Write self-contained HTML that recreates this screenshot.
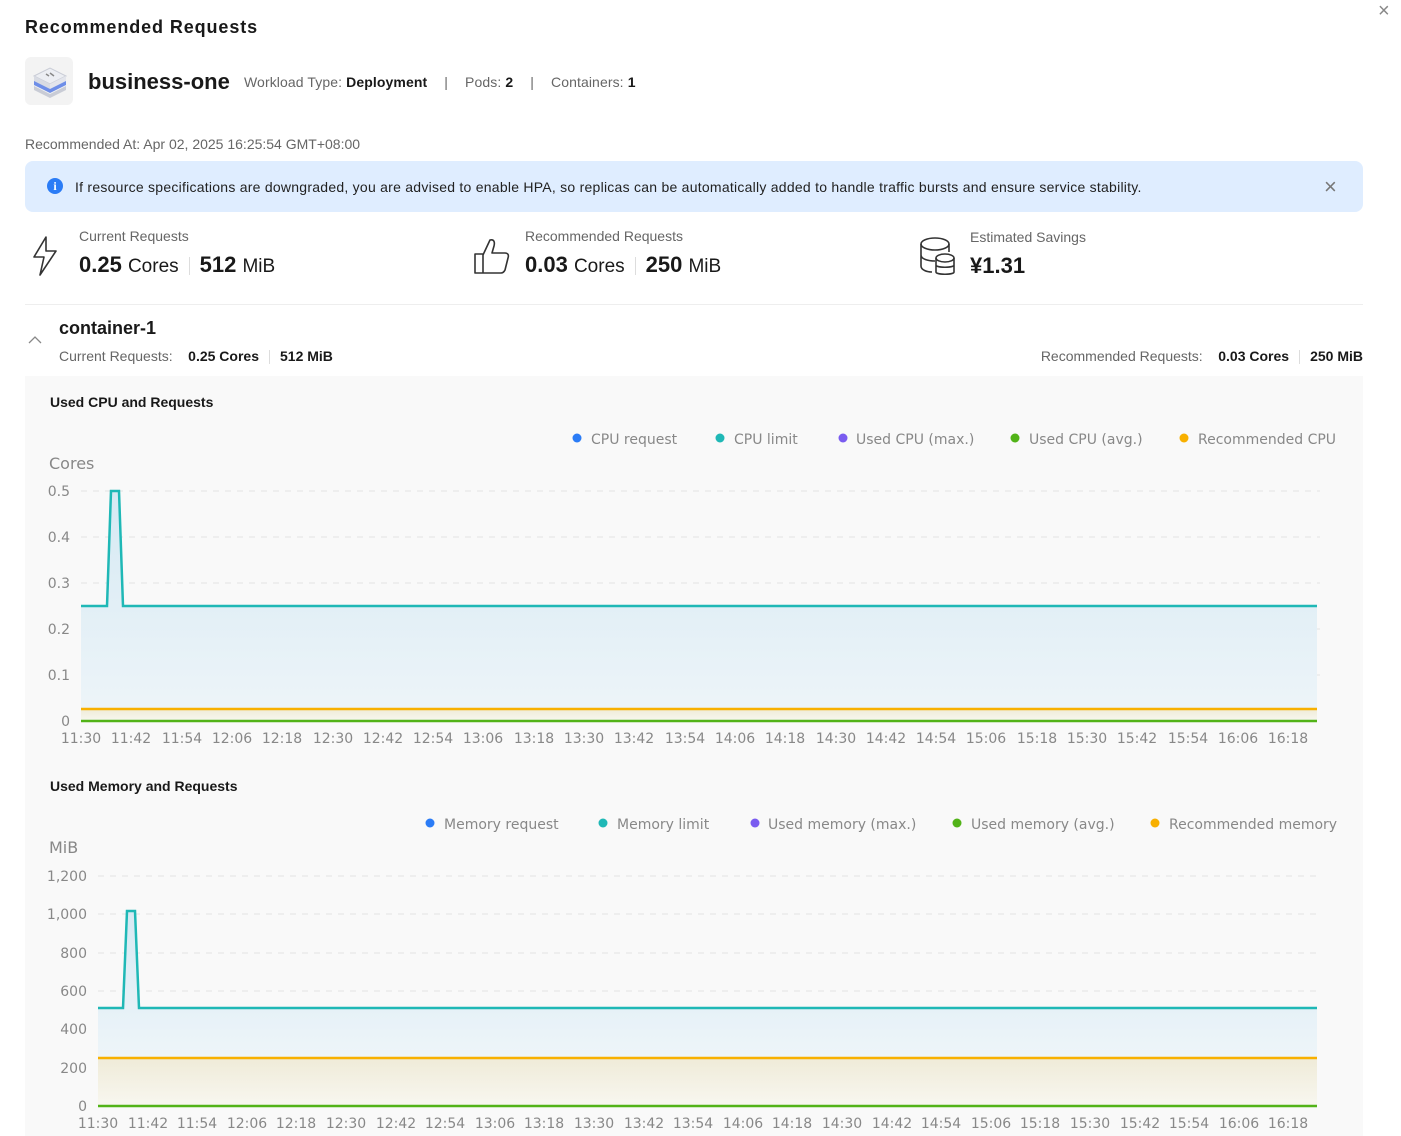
<!DOCTYPE html>
<html><head><meta charset="utf-8"><style>
*{margin:0;padding:0;box-sizing:border-box}
body{width:1401px;height:1136px;background:#fff;font-family:"Liberation Sans",sans-serif;position:relative;overflow:hidden;color:#191919}
.a{position:absolute;white-space:nowrap}
.g{color:#666}
.sep{display:inline-block;width:1px;height:18px;background:#ddd;margin:0 10px;vertical-align:-3px}
</style></head><body>
<div class="a" style="left:25px;top:17px;font-size:18px;font-weight:bold;letter-spacing:0.9px">Recommended Requests</div>
<div class="a" style="left:1378px;top:0px;font-size:20px;color:#888">×</div>
<div class="a" style="left:25px;top:57px;width:48px;height:48px;background:#f3f3f3;border-radius:6px"></div>
<svg class="a" style="left:30px;top:64px" width="40" height="36" viewBox="0 0 40 36"><path d="M4 22 L20 30 L36 22 L36 26 L20 34 L4 26Z" fill="#c9ccd6"/><path d="M4 16 L20 24 L36 16 L36 21 L20 29 L4 21Z" fill="#6e8ee8"/><path d="M4 12 L20 4 L36 12 L20 20Z" fill="#eceef3" stroke="#c9ccd6"/><path d="M4 12 L20 20 L20 25 L4 17Z" fill="#d8dbe3"/><path d="M36 12 L20 20 L20 25 L36 17Z" fill="#e3e5ec"/><path d="M16 10 l3 2 M20 9 l4 3" stroke="#888" stroke-width="1.5"/></svg>
<div class="a" style="left:88px;top:69px;font-size:22px;font-weight:bold">business-one</div>
<div class="a" style="left:244px;top:74px;font-size:14px;letter-spacing:0.1px"><span class="g">Workload Type:</span> <b>Deployment</b> <span class="g" style="margin:0 13px">|</span> <span class="g">Pods:</span> <b>2</b> <span class="g" style="margin:0 13px">|</span> <span class="g">Containers:</span> <b>1</b></div>
<div class="a g" style="left:25px;top:136px;font-size:14px">Recommended At: Apr 02, 2025 16:25:54 GMT+08:00</div>
<div class="a" style="left:25px;top:161px;width:1338px;height:51px;background:#dfedff;border-radius:8px"></div>
<div class="a" style="left:47px;top:178px;width:16px;height:16px;border-radius:50%;background:#2b7cf6;color:#fff;font-size:12px;font-weight:bold;text-align:center;line-height:16px;font-family:'Liberation Serif',serif">i</div>
<div class="a" style="left:75px;top:179px;font-size:14px;color:#222;letter-spacing:0.25px">If resource specifications are downgraded, you are advised to enable HPA, so replicas can be automatically added to handle traffic bursts and ensure service stability.</div>
<div class="a" style="left:1324px;top:174px;font-size:22px;color:#777">×</div>
<svg class="a" style="left:30px;top:235px" width="30" height="42" viewBox="0 0 30 42"><path d="M16 2 L4 22 L14 22 L10 40 L26 16 L16 16 Z" fill="none" stroke="#333" stroke-width="1.6" stroke-linejoin="round"/></svg>
<div class="a g" style="left:79px;top:228px;font-size:14px">Current Requests</div>
<div class="a" style="left:79px;top:252px;font-size:22px"><b>0.25</b> <span style="font-size:19px">Cores</span><span class="sep"></span><b>512</b> <span style="font-size:19px">MiB</span></div>
<svg class="a" style="left:473px;top:236px" width="38" height="40" viewBox="0 0 38 40"><path d="M2 18 H10 V37 H2 Z M10 19 L17 4 C21 3 22 6 21 10 L19 17 H32 C35 17 36 19 35 22 L32 34 C31 36 30 37 28 37 H10" fill="none" stroke="#333" stroke-width="1.6" stroke-linejoin="round"/></svg>
<div class="a g" style="left:525px;top:228px;font-size:14px">Recommended Requests</div>
<div class="a" style="left:525px;top:252px;font-size:22px"><b>0.03</b> <span style="font-size:19px">Cores</span><span class="sep"></span><b>250</b> <span style="font-size:19px">MiB</span></div>
<svg class="a" style="left:918px;top:236px" width="40" height="42" viewBox="0 0 40 42"><ellipse cx="17" cy="8" rx="14" ry="6" fill="none" stroke="#333" stroke-width="1.6"/><path d="M3 8 V30 C3 34 9 36 14 36 M3 19 C3 23 10 25 17 25 M31 8 V16" fill="none" stroke="#333" stroke-width="1.6"/><ellipse cx="27" cy="22" rx="9" ry="4" fill="#fff" stroke="#333" stroke-width="1.6"/><path d="M18 22 V36 C18 39 36 39 36 36 V22 M18 29 C18 32 36 32 36 29" fill="none" stroke="#333" stroke-width="1.6"/></svg>
<div class="a g" style="left:970px;top:229px;font-size:14px">Estimated Savings</div>
<div class="a" style="left:970px;top:253px;font-size:22px;font-weight:bold">¥1.31</div>
<div class="a" style="left:25px;top:304px;width:1338px;height:1px;background:#eee"></div>
<svg class="a" style="left:28px;top:335px" width="14" height="10"><path d="M1 8 L7 2 L13 8" fill="none" stroke="#888" stroke-width="1.3"/></svg>
<div class="a" style="left:59px;top:318px;font-size:18px;font-weight:bold">container-1</div>
<div class="a" style="left:59px;top:348px;font-size:14px"><span class="g">Current Requests:</span>&nbsp;&nbsp;&nbsp; <b>0.25 Cores</b><span class="sep" style="height:14px"></span><b>512 MiB</b></div>
<div class="a" style="right:38px;top:348px;font-size:14px"><span class="g">Recommended Requests:</span>&nbsp;&nbsp;&nbsp; <b>0.03 Cores</b><span class="sep" style="height:14px"></span><b>250 MiB</b></div>
<div class="a" style="left:25px;top:376px;width:1338px;height:760px;background:#f9f9f9"></div>
<div class="a" style="left:50px;top:394px;font-size:14px;font-weight:bold">Used CPU and Requests</div>
<div class="a" style="left:50px;top:778px;font-size:14px;font-weight:bold">Used Memory and Requests</div>
<svg class="a" style="left:0;top:0" width="1401" height="1136" font-family="DejaVu Sans, sans-serif">
<defs>
<linearGradient id="b" x1="0" y1="0" x2="0" y2="1"><stop offset="0" stop-color="#d6e9f3"/><stop offset="1" stop-color="#eef5f9"/></linearGradient>
<linearGradient id="y" x1="0" y1="0" x2="0" y2="1"><stop offset="0" stop-color="#efebd8"/><stop offset="1" stop-color="#f8f7f0"/></linearGradient>
</defs>
<g font-size="14" fill="#888">
<circle cx="577" cy="438" r="4.5" fill="#2b7cf6"/><text x="591" y="444">CPU request</text>
<circle cx="720" cy="438" r="4.5" fill="#1fb8b6"/><text x="734" y="444">CPU limit</text>
<circle cx="843" cy="438" r="4.5" fill="#7a5cf0"/><text x="856" y="444">Used CPU (max.)</text>
<circle cx="1015" cy="438" r="4.5" fill="#52b318"/><text x="1029" y="444">Used CPU (avg.)</text>
<circle cx="1184" cy="438" r="4.5" fill="#f8b000"/><text x="1198" y="444">Recommended CPU</text>
<circle cx="430" cy="823" r="4.5" fill="#2b7cf6"/><text x="444" y="829">Memory request</text>
<circle cx="603" cy="823" r="4.5" fill="#1fb8b6"/><text x="617" y="829">Memory limit</text>
<circle cx="755" cy="823" r="4.5" fill="#7a5cf0"/><text x="768" y="829">Used memory (max.)</text>
<circle cx="957" cy="823" r="4.5" fill="#52b318"/><text x="971" y="829">Used memory (avg.)</text>
<circle cx="1155" cy="823" r="4.5" fill="#f8b000"/><text x="1169" y="829">Recommended memory</text>
<text x="49" y="469" font-size="16">Cores</text>
<text x="49" y="853" font-size="16">MiB</text>
</g>
<g stroke="#e2e2e2" stroke-dasharray="6 6">
<line x1="81" y1="491" x2="1320" y2="491"/><line x1="81" y1="537" x2="1320" y2="537"/><line x1="81" y1="583" x2="1320" y2="583"/><line x1="81" y1="629" x2="1320" y2="629"/><line x1="81" y1="675" x2="1320" y2="675"/>
<line x1="98" y1="876" x2="1320" y2="876"/><line x1="98" y1="914" x2="1320" y2="914"/><line x1="98" y1="953" x2="1320" y2="953"/><line x1="98" y1="991" x2="1320" y2="991"/><line x1="98" y1="1029" x2="1320" y2="1029"/><line x1="98" y1="1068" x2="1320" y2="1068"/>
</g>
<g font-size="14" fill="#888" text-anchor="end">
<text x="70" y="496">0.5</text><text x="70" y="542">0.4</text><text x="70" y="588">0.3</text><text x="70" y="634">0.2</text><text x="70" y="680">0.1</text><text x="70" y="726">0</text>
<text x="87" y="881">1,200</text><text x="87" y="919">1,000</text><text x="87" y="958">800</text><text x="87" y="996">600</text><text x="87" y="1034">400</text><text x="87" y="1073">200</text><text x="87" y="1111">0</text>
</g>
<path d="M81 606 H107 L111 491 H119 L123 606 H1317 V721 H81Z" fill="url(#b)"/>
<rect x="81" y="709" width="1236" height="12" fill="url(#y)"/>
<path d="M81 606 H107 L111 491 H119 L123 606 H1317" fill="none" stroke="#1fb8b6" stroke-width="2.5"/>
<line x1="81" y1="709" x2="1317" y2="709" stroke="#f8b000" stroke-width="2.5"/>
<line x1="81" y1="721" x2="1317" y2="721" stroke="#52b318" stroke-width="2.5"/>
<path d="M98 1008 H123 L127 911 H135 L139 1008 H1317 V1058 H98Z" fill="url(#b)"/>
<rect x="98" y="1058" width="1219" height="48" fill="url(#y)"/>
<path d="M98 1008 H123 L127 911 H135 L139 1008 H1317" fill="none" stroke="#1fb8b6" stroke-width="2.5"/>
<line x1="98" y1="1058" x2="1317" y2="1058" stroke="#f8b000" stroke-width="2.5"/>
<line x1="98" y1="1106" x2="1317" y2="1106" stroke="#52b318" stroke-width="2.5"/>
<g font-size="14" fill="#888" text-anchor="middle">
<text x="81" y="743">11:30</text><text x="131" y="743">11:42</text><text x="182" y="743">11:54</text><text x="232" y="743">12:06</text><text x="282" y="743">12:18</text><text x="333" y="743">12:30</text><text x="383" y="743">12:42</text><text x="433" y="743">12:54</text><text x="483" y="743">13:06</text><text x="534" y="743">13:18</text><text x="584" y="743">13:30</text><text x="634" y="743">13:42</text><text x="685" y="743">13:54</text><text x="735" y="743">14:06</text><text x="785" y="743">14:18</text><text x="836" y="743">14:30</text><text x="886" y="743">14:42</text><text x="936" y="743">14:54</text><text x="986" y="743">15:06</text><text x="1037" y="743">15:18</text><text x="1087" y="743">15:30</text><text x="1137" y="743">15:42</text><text x="1188" y="743">15:54</text><text x="1238" y="743">16:06</text><text x="1288" y="743">16:18</text>
<text x="98" y="1128">11:30</text><text x="148" y="1128">11:42</text><text x="197" y="1128">11:54</text><text x="247" y="1128">12:06</text><text x="296" y="1128">12:18</text><text x="346" y="1128">12:30</text><text x="396" y="1128">12:42</text><text x="445" y="1128">12:54</text><text x="495" y="1128">13:06</text><text x="544" y="1128">13:18</text><text x="594" y="1128">13:30</text><text x="644" y="1128">13:42</text><text x="693" y="1128">13:54</text><text x="743" y="1128">14:06</text><text x="792" y="1128">14:18</text><text x="842" y="1128">14:30</text><text x="892" y="1128">14:42</text><text x="941" y="1128">14:54</text><text x="991" y="1128">15:06</text><text x="1040" y="1128">15:18</text><text x="1090" y="1128">15:30</text><text x="1140" y="1128">15:42</text><text x="1189" y="1128">15:54</text><text x="1239" y="1128">16:06</text><text x="1288" y="1128">16:18</text>
</g>
</svg>
</body></html>
